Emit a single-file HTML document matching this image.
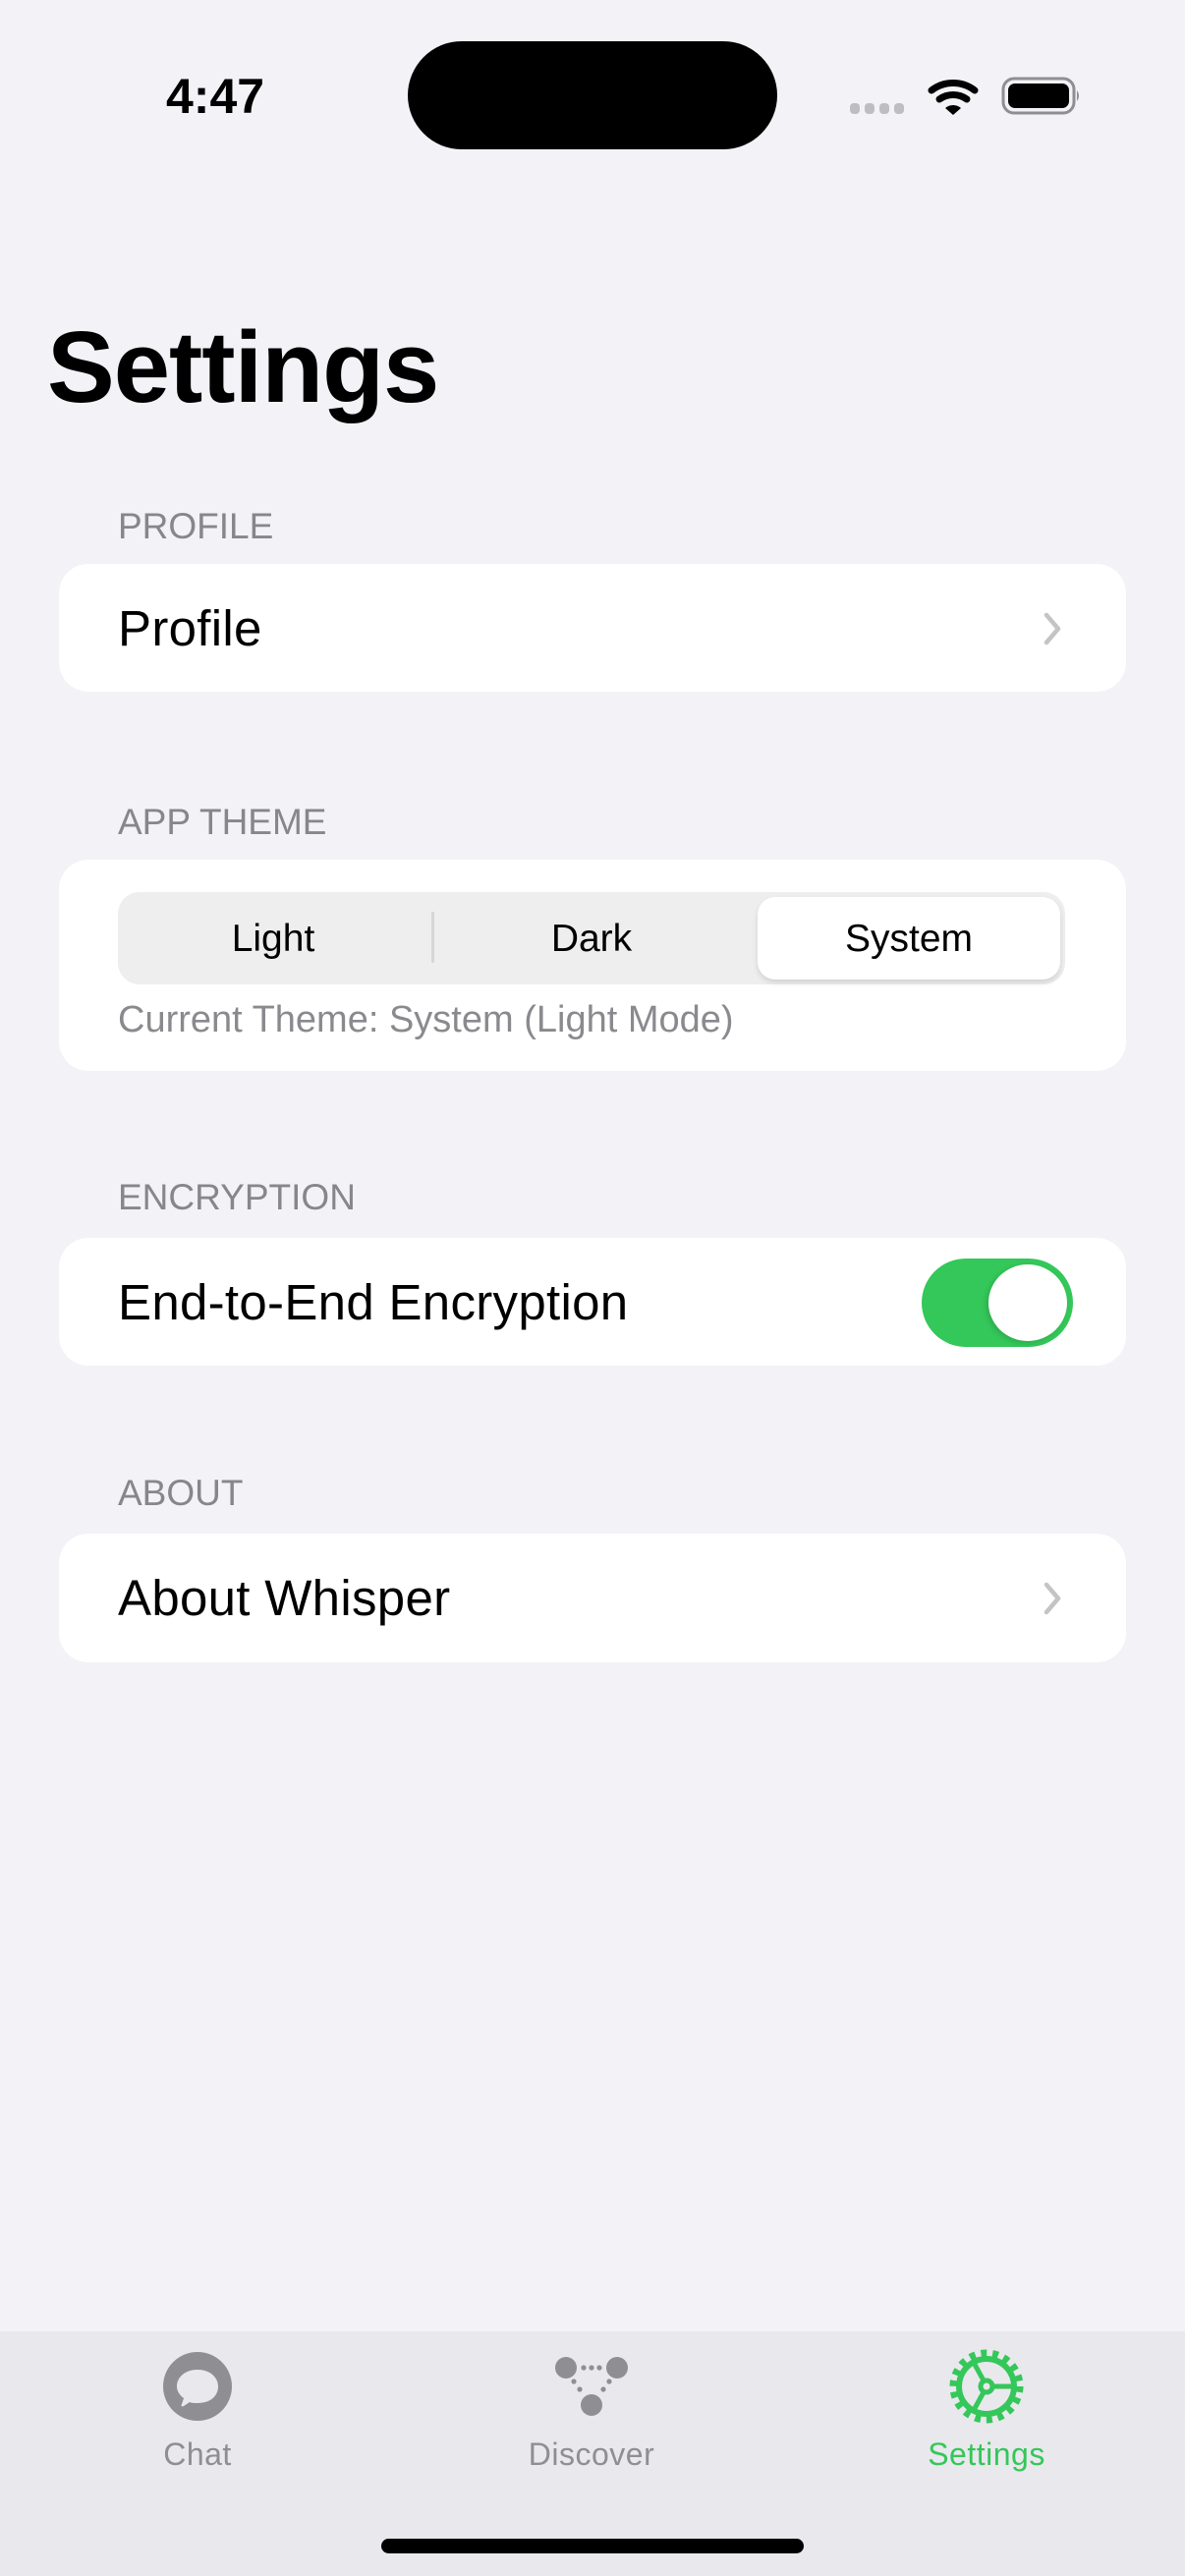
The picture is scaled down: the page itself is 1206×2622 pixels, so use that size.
<!DOCTYPE html>
<html><head><meta charset="utf-8"><style>
*{margin:0;padding:0;box-sizing:border-box}
body{width:1206px;height:2622px;background:#f2f2f7;position:relative;overflow:hidden;font-family:"Liberation Sans",sans-serif;color:#000}
.a{position:absolute}
.hdr{position:absolute;left:120px;font-size:37px;color:#86868b;line-height:1}
.card{position:absolute;left:60px;width:1086px;background:#fff;border-radius:30px}
.row{position:absolute;left:60px;font-size:51px;line-height:1;letter-spacing:0.3px}
.chev{position:absolute;left:1000px}
.seg{position:absolute;font-size:39px;line-height:1;text-align:center;font-weight:500}
.tl{position:absolute;font-size:32px;line-height:1;text-align:center;width:240px;color:#8e8e93;letter-spacing:0.5px}
</style></head><body>
<div class="a" style="left:169px;top:73px;font-size:50px;font-weight:bold;line-height:1">4:47</div>
<div class="a" style="left:415px;top:42px;width:376px;height:110px;background:#000;border-radius:55px"></div>
<svg class="a" style="left:860px;top:70px" width="250" height="55" viewBox="860 70 250 55">
<g fill="#bdbdc2"><rect x="865" y="105" width="10" height="11" rx="4"/><rect x="880" y="105" width="10" height="11" rx="4"/><rect x="895" y="105" width="10" height="11" rx="4"/><rect x="910" y="105" width="10" height="11" rx="4"/></g>
<g fill="none" stroke="#000" stroke-width="7" stroke-linecap="round"><path d="M948 92 A36 36 0 0 1 992 92"/><path d="M956 101 A24 24 0 0 1 984 101"/></g>
<path d="M962 110 A12 12 0 0 1 978 110 L970 117 Z" fill="#000"/>
<rect x="1021" y="80" width="72" height="35" rx="11" fill="none" stroke="#8e8e93" stroke-width="3"/>
<rect x="1026" y="85" width="62" height="25" rx="7" fill="#000"/>
<path d="M1096 92 Q1100 97.5 1096 103 Z" fill="#8e8e93"/>
</svg>
<div class="a" style="left:48px;top:322px;font-size:103px;font-weight:bold;line-height:1;letter-spacing:-1px">Settings</div>

<div class="hdr" style="top:517px">PROFILE</div>
<div class="card" style="top:574px;height:130px">
<div class="row" style="top:40px">Profile</div>
<svg class="chev" style="top:48px" width="24" height="36" viewBox="0 0 24 36"><path d="M5 4 L17 18 L5 32" fill="none" stroke="#c4c4c7" stroke-width="4.5" stroke-linecap="round" stroke-linejoin="round"/></svg>
</div>

<div class="hdr" style="top:818px">APP THEME</div>
<div class="card" style="top:875px;height:215px">
<div class="a" style="left:60px;top:33px;width:964px;height:94px;background:#eeeeef;border-radius:22px"></div>
<div class="a" style="left:379px;top:53px;width:3px;height:52px;background:#d6d6d8;border-radius:2px"></div>
<div class="a" style="left:711px;top:38px;width:308px;height:84px;background:#fff;border-radius:18px;box-shadow:0 3px 6px rgba(0,0,0,0.12)"></div>
<div class="seg" style="left:118px;top:61px;width:200px">Light</div>
<div class="seg" style="left:442px;top:61px;width:200px">Dark</div>
<div class="seg" style="left:765px;top:61px;width:200px">System</div>
<div class="a" style="left:60px;top:144px;font-size:38px;color:#8a8a8e;line-height:1">Current Theme: System (Light Mode)</div>
</div>

<div class="hdr" style="top:1200px">ENCRYPTION</div>
<div class="card" style="top:1260px;height:130px">
<div class="row" style="top:40px">End-to-End Encryption</div>
<div class="a" style="left:878px;top:21px;width:154px;height:90px;background:#34c759;border-radius:45px"></div>
<div class="a" style="left:946px;top:27px;width:80px;height:78px;background:#fff;border-radius:50%;box-shadow:-2px 2px 6px rgba(0,0,0,0.15)"></div>
</div>

<div class="hdr" style="top:1501px">ABOUT</div>
<div class="card" style="top:1561px;height:131px">
<div class="row" style="top:40px">About Whisper</div>
<svg class="chev" style="top:48px" width="24" height="36" viewBox="0 0 24 36"><path d="M5 4 L17 18 L5 32" fill="none" stroke="#c4c4c7" stroke-width="4.5" stroke-linecap="round" stroke-linejoin="round"/></svg>
</div>

<div class="a" style="left:0;top:2373px;width:1206px;height:249px;background:#e9e8ed"></div>
<svg class="a" style="left:0;top:2373px" width="1206" height="120" viewBox="0 2373 1206 120">
<circle cx="201" cy="2429" r="35" fill="#8e8e93"/>
<path d="M201 2412 C214 2412 222 2420 222 2429 C222 2439 214 2446 201 2446 C198 2446 195 2446 193 2445 L187 2449 C185 2450 184 2449 185 2447 L187 2441 C183 2438 180 2434 180 2429 C180 2420 188 2412 201 2412 Z" fill="#e9e8ed"/>
<g fill="#8e8e93"><circle cx="576" cy="2410" r="11"/><circle cx="628" cy="2410" r="11"/><circle cx="602" cy="2448" r="11"/>
<circle cx="594" cy="2410" r="2.6"/><circle cx="602" cy="2410" r="2.6"/><circle cx="610" cy="2410" r="2.6"/>
<circle cx="584" cy="2424" r="2.6"/><circle cx="590" cy="2432" r="2.6"/><circle cx="620" cy="2424" r="2.6"/><circle cx="614" cy="2432" r="2.6"/></g>
<g fill="none" stroke="#34c759" stroke-linecap="butt">
<circle cx="1004" cy="2429" r="33" stroke-width="9" stroke-dasharray="5.76 5.76"/>
<circle cx="1004" cy="2429" r="28" stroke-width="6"/>
<circle cx="1004" cy="2429" r="6" stroke-width="5"/>
<path d="M1010 2429 H1032 M1001 2423 L990 2403 M1001 2435 L990 2455" stroke-width="5"/>
</g>
</svg>
<div class="tl" style="left:81px;top:2482px">Chat</div>
<div class="tl" style="left:482px;top:2482px">Discover</div>
<div class="tl" style="left:884px;top:2482px;color:#34c759">Settings</div>
<div class="a" style="left:388px;top:2584px;width:430px;height:15px;background:#000;border-radius:8px"></div>
</body></html>
